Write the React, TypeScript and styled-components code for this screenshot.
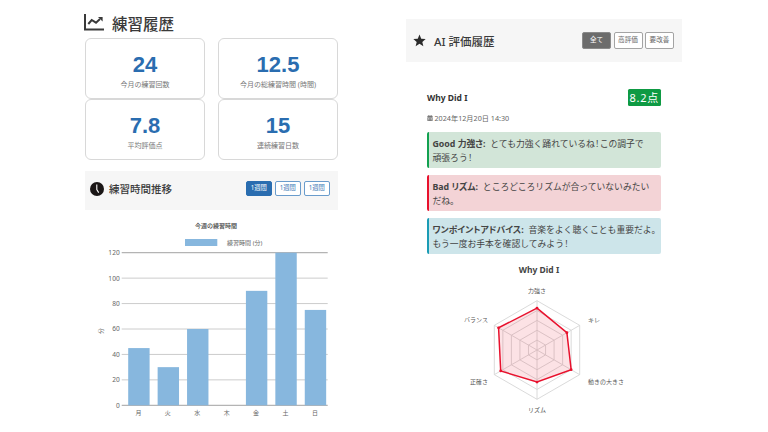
import * as React from "react";
import styled, { createGlobalStyle } from "styled-components";
import { FaCalendarAlt } from "react-icons/fa";

const JP = `"Noto Sans", "Noto Sans CJK JP", sans-serif`;
const NUM = `"Liberation Sans", "Noto Sans CJK JP", sans-serif`;

const STATS = [
  { value: "24", label: "今月の練習回数" },
  { value: "12.5", label: "今月の総練習時間 (時間)" },
  { value: "7.8", label: "平均評価点" },
  { value: "15", label: "連続練習日数" },
];

const DAYS = [
  { day: "月", min: 45 },
  { day: "火", min: 30 },
  { day: "水", min: 60 },
  { day: "木", min: 0 },
  { day: "金", min: 90 },
  { day: "土", min: 120 },
  { day: "日", min: 75 },
];

const RADAR = [
  { label: "力強さ", score: 8.5, x: 537, y: 293, anchor: "middle" },
  { label: "キレ", score: 7, x: 588, y: 322, anchor: "start" },
  { label: "動きの大きさ", score: 8, x: 588, y: 384, anchor: "start" },
  { label: "リズム", score: 6.5, x: 537, y: 412, anchor: "middle" },
  { label: "正確さ", score: 8.5, x: 488, y: 384, anchor: "end" },
  { label: "バランス", score: 9, x: 488, y: 322, anchor: "end" },
];

const GlobalStyle = createGlobalStyle`
  html, body {
    margin: 0;
    padding: 0;
    background: #fff;
  }
  body {
    width: 768px;
    height: 432px;
    overflow: hidden;
    font-family: ${JP};
    color: #333;
  }
`;

const Page = styled.div`
  display: flex;
  align-items: flex-start;
  gap: 68px;
  padding-left: 85px;
  width: 768px;
  height: 432px;
  box-sizing: border-box;
  overflow: hidden;
`;

const LeftColumn = styled.section`
  width: 253px;
  flex: none;
`;

const RightColumn = styled.section`
  width: 276px;
  flex: none;
  padding-top: 19px;
`;

const PageTitle = styled.h1`
  display: flex;
  align-items: center;
  gap: 8px;
  height: 38px;
  margin: 0 0 0 -1px;
  padding-top: 9px;
  box-sizing: border-box;
  font-size: 15.5px;
  font-weight: 500;
  color: #3a3a3a;
`;

const TitleIcon = styled.svg`
  width: 20px;
  height: 17px;
  flex: none;
  margin-top: -3px;
`;

const StatGrid = styled.div`
  display: grid;
  grid-template-columns: 120px 120px;
  justify-content: space-between;
`;

const StatCard = styled.div`
  height: 61px;
  box-sizing: border-box;
  border: 1px solid #d8d8d8;
  border-radius: 6px;
  display: flex;
  flex-direction: column;
  align-items: center;
  padding-top: 14px;
`;

const StatValue = styled.div`
  font-family: ${NUM};
  font-size: 22px;
  font-weight: 700;
  line-height: 24px;
  color: #2a6db0;
`;

const StatLabel = styled.div`
  margin-top: 3px;
  font-size: 7px;
  line-height: 9px;
  color: #777;
`;

const SectionBar = styled.div<{ $height: number }>`
  display: flex;
  align-items: center;
  justify-content: space-between;
  height: ${({ $height }) => $height}px;
  background: #f6f6f6;
  box-sizing: border-box;
`;

const ChartBar = styled(SectionBar)`
  margin-top: 11px;
  padding: 0 8px 4px 5px;
`;

const HistoryBar = styled(SectionBar)`
  padding: 0 8px 0 7px;
`;

const BarTitle = styled.h2<{ $size: number; $gap: number }>`
  display: flex;
  align-items: center;
  gap: ${({ $gap }) => $gap}px;
  margin: 0;
  font-size: ${({ $size }) => $size}px;
  font-weight: 500;
  color: #3a3a3a;
`;

const BarIcon = styled.svg`
  width: 14px;
  height: 14px;
  flex: none;
`;

const StarIcon = styled(BarIcon)`
  width: 13px;
  height: 13px;
`;

const ButtonRow = styled.div`
  display: flex;
  gap: 2.5px;
`;

const WeekButton = styled.button<{ $active?: boolean }>`
  width: 26.5px;
  height: 15.5px;
  padding: 0;
  box-sizing: border-box;
  border: 1px solid ${({ $active }) => ($active ? "#2a6db0" : "#6a9ccc")};
  border-radius: 2px;
  background: ${({ $active }) => ($active ? "#2a6db0" : "#fff")};
  color: ${({ $active }) => ($active ? "#fff" : "#3a78b5")};
  font-family: ${JP};
  font-size: 6.3px;
  line-height: 1;
`;

const FilterButton = styled.button<{ $active?: boolean }>`
  width: 29px;
  height: 16.5px;
  padding: 0;
  box-sizing: border-box;
  border: 1px solid ${({ $active }) => ($active ? "#8a8a8a" : "#a4a4a4")};
  border-radius: 2px;
  background: ${({ $active }) => ($active ? "#6c6c6c" : "#fff")};
  color: ${({ $active }) => ($active ? "#fff" : "#666")};
  font-family: ${JP};
  font-size: 6.6px;
  line-height: 1;
`;

const ChartSvg = styled.svg`
  display: block;
  width: 253px;
  height: 222px;
  text {
    font-family: ${JP};
  }
`;

const Review = styled.article`
  padding: 27px 21px 0;
`;

const ReviewHead = styled.div`
  display: flex;
  align-items: center;
  justify-content: space-between;
  height: 17px;
`;

const SongTitle = styled.div`
  font-size: 8.5px;
  font-weight: 700;
  color: #333;
`;

const ScoreBadge = styled.div`
  width: 33.5px;
  height: 17px;
  border-radius: 1.5px;
  background: #0e9a43;
  color: #fff;
  font-size: 11px;
  line-height: 17px;
  letter-spacing: 0.7px;
  text-align: center;
`;

const DateLine = styled.div`
  display: flex;
  align-items: center;
  gap: 1.5px;
  margin-top: 5px;
  height: 14px;
  font-size: 7.2px;
  color: #666;
  svg {
    width: 6px;
    height: 6px;
    color: #777;
  }
`;

const TONES = {
  good: { line: "#12a150", fill: "#d2e5d8" },
  bad: { line: "#e8112d", fill: "#f3d3d6" },
  tip: { line: "#1b9cb5", fill: "#cde5ea" },
};

const Advice = styled.div<{ $tone: keyof typeof TONES }>`
  height: 36px;
  margin-top: 7px;
  padding: 5px 0 0 3.5px;
  box-sizing: border-box;
  border-left: 2.5px solid ${({ $tone }) => TONES[$tone].line};
  border-radius: 2px;
  background: ${({ $tone }) => TONES[$tone].fill};
  font-size: 8.8px;
  line-height: 14px;
  color: #444;
  white-space: nowrap;
  b {
    font-weight: 700;
    font-feature-settings: "palt";
    margin-right: 2.5px;
  }
`;

const Bang = styled.span`
  padding: 0 1.2px;
`;

const RadarTitle = styled.div`
  margin-top: 9px;
  padding-right: 10px;
  font-size: 8.5px;
  font-weight: 700;
  line-height: 14px;
  color: #444;
  text-align: center;
`;

const RadarSvg = styled.svg`
  display: block;
  margin-top: 3px;
  width: 234px;
  height: 150px;
  text {
    font-family: ${JP};
  }
`;

function WeekChart() {
  // chart area inside the svg, page y 210 is svg y 0
  const top = 42.7;
  const bottom = 195.3;
  const left = 36.7;
  const right = 242.7;
  const yOf = (v: number) => bottom - (v / 120) * (bottom - top);
  const step = (right - left) / 7;

  return (
    <ChartSvg viewBox="0 0 253 222">
      <text x="131" y="17.5" fontSize="6" fontWeight="500" textAnchor="middle" fill="#444">
        今週の練習時間
      </text>
      <rect x="100" y="29" width="32.3" height="7" fill="#87b7de" />
      <text x="159.7" y="34.5" fontSize="6" textAnchor="middle" fill="#666">
        練習時間 (分)
      </text>
      <text x="16" y="123" fontSize="6" textAnchor="middle" fill="#666" transform="rotate(-90 16 121)">
        分
      </text>
      {[0, 20, 40, 60, 80, 100, 120].map((v) => (
        <g key={v}>
          <line
            x1={left}
            x2={right}
            y1={yOf(v)}
            y2={yOf(v)}
            stroke={v === 0 || v === 120 ? "#b4b4b4" : "#cccccc"}
            strokeWidth={v === 0 || v === 120 ? 1.3 : 1}
          />
          <text x={left - 2} y={yOf(v) + 2.4} fontSize="6.6" textAnchor="end" fill="#666">
            {v}
          </text>
        </g>
      ))}
      {DAYS.map((d, i) => (
        <g key={d.day}>
          <rect
            x={left + i * step + 6.5}
            y={yOf(d.min)}
            width={21.4}
            height={bottom - yOf(d.min)}
            fill="#87b7de"
          />
          <text x={left + i * step + step / 2 + 2} y={204.5} fontSize="6" textAnchor="middle" fill="#666">
            {d.day}
          </text>
        </g>
      ))}
    </ChartSvg>
  );
}

function SkillRadar() {
  const cx = 537;
  const cy = 350;
  const r = 49.3;
  const point = (i: number, k: number) => {
    const a = (Math.PI / 3) * i - Math.PI / 2;
    return [cx + r * k * Math.cos(a), cy + r * k * Math.sin(a)];
  };
  const ring = (k: number) => RADAR.map((_, i) => point(i, k).join(",")).join(" ");
  const shape = RADAR.map((s, i) => point(i, s.score / 10));

  return (
    <RadarSvg viewBox="427 280 234 150">
      {[0.2, 0.4, 0.6, 0.8, 1].map((k) => (
        <polygon key={k} points={ring(k)} fill="none" stroke="#d6d6d6" strokeWidth="0.9" />
      ))}
      {RADAR.map((s, i) => {
        const [x, y] = point(i, 1);
        return <line key={s.label} x1={cx} y1={cy} x2={x} y2={y} stroke="#d6d6d6" strokeWidth="0.9" />;
      })}
      <polygon
        points={shape.map((p) => p.join(",")).join(" ")}
        fill="rgba(232, 17, 45, 0.12)"
        stroke="#e8112d"
        strokeWidth="1.5"
      />
      {shape.map(([x, y], i) => (
        <circle key={i} cx={x} cy={y} r="1.4" fill="#e8112d" />
      ))}
      {RADAR.map((s) => (
        <text key={s.label} x={s.x} y={s.y} fontSize="6" textAnchor={s.anchor} fill="#555">
          {s.label}
        </text>
      ))}
    </RadarSvg>
  );
}

export default function App() {
  return (
    <>
      <GlobalStyle />
      <Page>
        <LeftColumn>
          <PageTitle>
            <TitleIcon viewBox="0 0 20 17">
              <path d="M1 0v15.6h19" fill="none" stroke="#3a3a3a" strokeWidth="2" />
              <path d="M4.3 10l3.4-4 4.3 2.7 4-3.6" fill="none" stroke="#3a3a3a" strokeWidth="2" />
              <path d="M14 3h4.6v4.6z" fill="#3a3a3a" />
            </TitleIcon>
            練習履歴
          </PageTitle>
          <StatGrid>
            {STATS.map((s) => (
              <StatCard key={s.label}>
                <StatValue>{s.value}</StatValue>
                <StatLabel>{s.label}</StatLabel>
              </StatCard>
            ))}
          </StatGrid>
          <ChartBar $height={39}>
            <BarTitle $size={10.5} $gap={5}>
              <BarIcon viewBox="0 0 14 14">
                <circle cx="7" cy="7" r="7" fill="#1a1616" />
                <path d="M6.8 2.6v5l1.9 3" fill="none" stroke="#fff" strokeWidth="1.1" />
              </BarIcon>
              練習時間推移
            </BarTitle>
            <ButtonRow>
              <WeekButton $active>1週間</WeekButton>
              <WeekButton>1週間</WeekButton>
              <WeekButton>1週間</WeekButton>
            </ButtonRow>
          </ChartBar>
          <WeekChart />
        </LeftColumn>
        <RightColumn>
          <HistoryBar $height={43}>
            <BarTitle $size={11.5} $gap={8}>
              <StarIcon viewBox="0 0 24 24">
                <path
                  d="M12 1l3.2 7.6 8.2.7-6.2 5.4 1.9 8L12 18l-7.1 4.7 1.9-8L.6 9.3l8.2-.7z"
                  fill="#2b2b2b"
                />
              </StarIcon>
              AI 評価履歴
            </BarTitle>
            <ButtonRow>
              <FilterButton $active>全て</FilterButton>
              <FilterButton>高評価</FilterButton>
              <FilterButton>要改善</FilterButton>
            </ButtonRow>
          </HistoryBar>
          <Review>
            <ReviewHead>
              <SongTitle>Why Did I</SongTitle>
              <ScoreBadge>8.2点</ScoreBadge>
            </ReviewHead>
            <DateLine>
              <FaCalendarAlt />
              2024年12月20日 14:30
            </DateLine>
            <Advice $tone="good">
              <b>Good 力強さ:</b> とても力強く踊れているね<Bang>!</Bang>この調子で
              <br />
              頑張ろう<Bang>!</Bang>
            </Advice>
            <Advice $tone="bad">
              <b>Bad リズム:</b> ところどころリズムが合っていないみたい
              <br />
              だね。
            </Advice>
            <Advice $tone="tip">
              <b>ワンポイントアドバイス:</b> 音楽をよく聴くことも重要だよ。
              <br />
              もう一度お手本を確認してみよう<Bang>!</Bang>
            </Advice>
            <RadarTitle>Why Did I</RadarTitle>
            <SkillRadar />
          </Review>
        </RightColumn>
      </Page>
    </>
  );
}
